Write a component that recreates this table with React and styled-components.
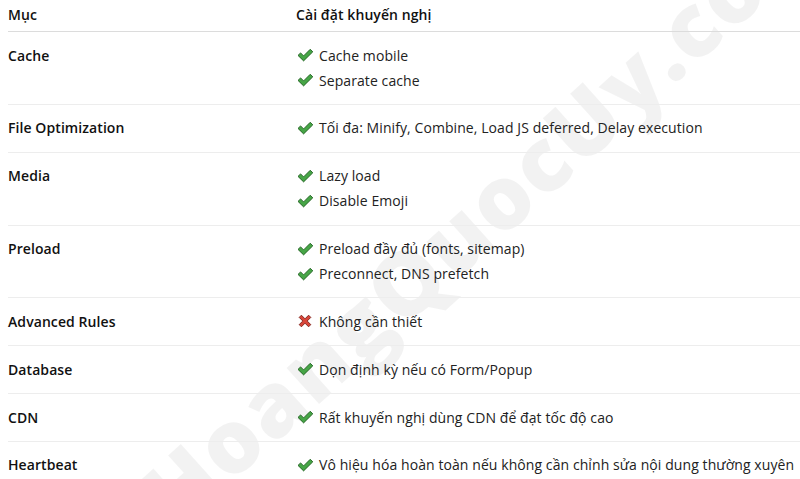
import React from "react";
import styled, { createGlobalStyle } from "styled-components";

const GlobalStyle = createGlobalStyle`
  body {
    margin: 0;
    background: #ffffff;
  }
`;

const Page = styled.div`
  position: relative;
  height: 479px;
  overflow: hidden;
  padding-left: 8px;
  font-family: "Open Sans", "Noto Sans", sans-serif;
  font-size: 14px;
  letter-spacing: 0.08px;
  color: #222222;
`;

// diagonal site watermark behind the table
const Watermark = styled.div`
  position: absolute;
  left: 155px;
  top: 462px;
  line-height: 88px;
  transform: rotate(-42deg);
  transform-origin: 0 50%;
  font-family: "Open Sans", sans-serif;
  font-weight: 800;
  font-size: 88px;
  letter-spacing: 2px;
  color: rgba(0, 0, 0, 0.05);
  white-space: nowrap;
  pointer-events: none;
  z-index: 0;
`;

const Table = styled.table`
  position: relative;
  z-index: 1;
  width: 800px;
  border-collapse: collapse;
`;

const HeadRow = styled.tr`
  border-bottom: 1px solid #dcdcdc;
`;

const HeadCell = styled.th`
  text-align: left;
  font-weight: 600;
  color: #111111;
  padding: 3px 0 4px;
  line-height: 24px;
  width: ${(props) => props.width || "auto"};
`;

const Row = styled.tr`
  border-bottom: 1px solid #ededed;
`;

const Label = styled.td`
  width: 288px;
  padding: 10.5px 0 11.35px;
  line-height: 25px;
  vertical-align: top;
  font-weight: 600;
  color: #111111;
`;

const Cell = styled.td`
  padding: 10.5px 0 11.35px;
  line-height: 25px;
  vertical-align: top;
`;

const Item = styled.div`
  display: flex;
  align-items: center;
  gap: 5px;
  white-space: nowrap;
`;

const IconBox = styled.span`
  display: inline-flex;
  width: 18px;
  justify-content: center;
`;

function Check() {
  return (
    <svg width="17" height="14" viewBox="0 0 17 14">
      <path
        d="M1 7.4 L3.6 4.9 L6.6 7.9 L13.2 1.3 L15.8 3.8 L6.6 12.9 Z"
        fill="#46a546"
        stroke="#1f5f1f"
        strokeWidth="0.9"
        strokeLinejoin="round"
      />
    </svg>
  );
}

function Cross() {
  return (
    <svg width="16" height="16" viewBox="0 0 16 16">
      <path
        d="M2.2 4.4 L4.4 2.2 L8 5.8 L11.6 2.2 L13.8 4.4 L10.2 8 L13.8 11.6 L11.6 13.8 L8 10.2 L4.4 13.8 L2.2 11.6 L5.8 8 Z"
        fill="#d8463a"
        stroke="#7c1e16"
        strokeWidth="0.9"
        strokeLinejoin="round"
      />
    </svg>
  );
}

const rows = [
  { label: "Cache", items: ["Cache mobile", "Separate cache"] },
  {
    label: "File Optimization",
    items: ["Tối đa: Minify, Combine, Load JS deferred, Delay execution"],
  },
  { label: "Media", items: ["Lazy load", "Disable Emoji"] },
  {
    label: "Preload",
    items: ["Preload đầy đủ (fonts, sitemap)", "Preconnect, DNS prefetch"],
  },
  { label: "Advanced Rules", items: ["Không cần thiết"], no: true },
  { label: "Database", items: ["Dọn định kỳ nếu có Form/Popup"] },
  { label: "CDN", items: ["Rất khuyến nghị dùng CDN để đạt tốc độ cao"] },
  {
    label: "Heartbeat",
    items: [
      "Vô hiệu hóa hoàn toàn nếu không cần chỉnh sửa nội dung thường xuyên",
    ],
  },
];

export default function App() {
  return (
    <>
      <GlobalStyle />
      <Page>
        <Watermark>HoangQuocUy.com</Watermark>
        <Table>
          <thead>
            <HeadRow>
              <HeadCell width="288px">Mục</HeadCell>
              <HeadCell>Cài đặt khuyến nghị</HeadCell>
            </HeadRow>
          </thead>
          <tbody>
            {rows.map((row) => (
              <Row key={row.label}>
                <Label>{row.label}</Label>
                <Cell>
                  {row.items.map((text) => (
                    <Item key={text}>
                      <IconBox>{row.no ? <Cross /> : <Check />}</IconBox>
                      {text}
                    </Item>
                  ))}
                </Cell>
              </Row>
            ))}
          </tbody>
        </Table>
      </Page>
    </>
  );
}
